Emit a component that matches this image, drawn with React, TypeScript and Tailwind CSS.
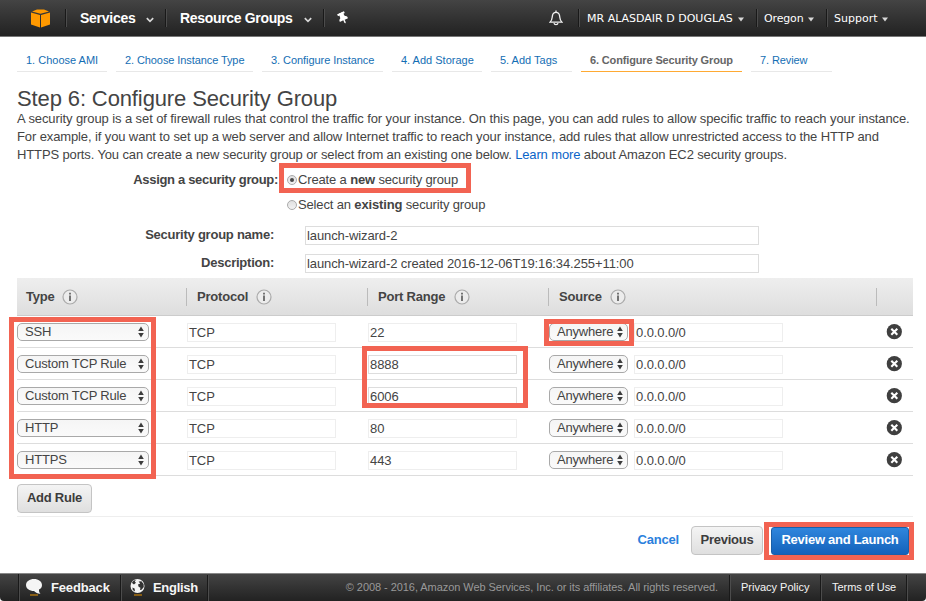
import type { ReactNode } from "react";
import { FaThumbtack } from "react-icons/fa";

const steps = [
  { label: "1. Choose AMI", box: "w-[90px]", track: "tracking-[0px]" },
  { label: "2. Choose Instance Type", box: "w-[137px]", track: "tracking-[-0.09px]" },
  { label: "3. Configure Instance", box: "w-[121px]", track: "tracking-[-0.06px]" },
  { label: "4. Add Storage", box: "w-[90px]", track: "tracking-[0px]" },
  { label: "5. Add Tags", box: "w-[81px]", track: "tracking-[0px]" },
  { label: "6. Configure Security Group", box: "w-[161px]", track: "tracking-[-0.14px]", active: true },
  { label: "7. Review", box: "w-[81px]", track: "tracking-[-0.1px]" },
];

const rules = [
  { type: "SSH", port: "22" },
  { type: "Custom TCP Rule", port: "8888", editable: true },
  { type: "Custom TCP Rule", port: "6006", editable: true },
  { type: "HTTP", port: "80" },
  { type: "HTTPS", port: "443" },
];

function Chevron() {
  return (
    <svg width="8" height="6" viewBox="0 0 8 6" fill="none" stroke="#d8d8d8" strokeWidth="1.7">
      <path d="M0.8 1.2L4 4.3L7.2 1.2" />
    </svg>
  );
}

function Caret() {
  return (
    <svg width="6" height="5" viewBox="0 0 6 5" fill="#d8d8d8">
      <path d="M0 0.4H6L3 4.4Z" />
    </svg>
  );
}

function Divider() {
  return <span className="h-[18px] w-[2px] shrink-0 border-l border-r border-l-[#191919] border-r-[#4c4c4c]" />;
}

function InfoIcon() {
  return (
    <svg width="16" height="16" viewBox="0 0 16 16">
      <circle cx="8" cy="8" r="7" fill="#ececec" stroke="#aaa" strokeWidth="1.2" />
      <path d="M8 6.6V12" stroke="#555" strokeWidth="1.6" />
      <path d="M8 3.8V5.5" stroke="#555" strokeWidth="1.6" />
    </svg>
  );
}

function Select({ children, className }: { children: ReactNode; className: string }) {
  return (
    <div className={`flex h-[18px] items-center justify-between rounded-[5px] border border-[#a9a9a9] bg-gradient-to-b from-[#f5f5f5] to-[#fafafa] pr-[4px] pl-[7px] ${className}`}>
      <span className="leading-[16px] tracking-[-0.2px] whitespace-nowrap">{children}</span>
      <svg width="6" height="12" viewBox="0 0 6 12" fill="#3c3c3c">
        <path d="M3 0.5L5.8 5H0.2ZM3 11.5L0.2 7H5.8Z" />
      </svg>
    </div>
  );
}

function Field({ children, className }: { children: ReactNode; className: string }) {
  return <div className={`h-[19px] border bg-white pl-[1px] leading-[18px] tracking-[-0.1px] whitespace-nowrap ${className}`}>{children}</div>;
}

function HeadCell({ children, text }: { children: string; text: string }) {
  return (
    <div className="flex h-[18px] items-center pl-[9px] font-bold tracking-[-0.2px]">
      <span className={text}>{children}</span>
      <InfoIcon />
    </div>
  );
}

function Radio({ checked }: { checked?: boolean }) {
  return (
    <span className="flex size-[10px] items-center justify-center rounded-full border border-[#ababab] bg-gradient-to-b from-[#e0e0e0] to-[#f2f2f2]">
      {checked && <span className="size-[4px] rounded-full bg-[#4a4a4a]" />}
    </span>
  );
}

function RemoveIcon() {
  return (
    <svg width="17" height="17" viewBox="0 0 17 17">
      <circle cx="8.3" cy="8.7" r="7.6" fill="#3f3f3f" />
      <path d="M5.3 5.7L11.3 11.7M11.3 5.7L5.3 11.7" stroke="#fff" strokeWidth="2.1" />
    </svg>
  );
}

const greyButton =
  "flex items-center justify-center rounded-[4px] border border-[#c4c4c4] bg-gradient-to-b from-[#f4f4f4] to-[#dfdfdf] font-bold tracking-[-0.25px] text-[#3c3c3c]";

function Header() {
  return (
    <header className="flex h-[37px] items-center border-b border-[#777] bg-gradient-to-b from-[#444] to-[#222] text-white">
      <svg className="ml-[31px]" width="19" height="19" viewBox="0 0 19 19">
        <path d="M0 3.6L9 6V18.6L0 15.4Z" fill="#f90" />
        <path d="M19 3.6L10 6V18.6L19 15.4Z" fill="#f90" />
        <path d="M1 2.5L6 0.6H13L18 2.5L9.5 4.8Z" fill="#f90" />
      </svg>
      <span className="ml-[15px] flex"><Divider /></span>
      <span className="ml-[13px] w-[55px] pt-px text-[14px] font-bold tracking-[-0.25px] whitespace-nowrap">Services</span>
      <span className="ml-[11px] pt-[4px]"><Chevron /></span>
      <span className="ml-[11px] flex"><Divider /></span>
      <span className="ml-[13px] w-[113px] pt-px text-[14px] font-bold tracking-[-0.33px] whitespace-nowrap">Resource Groups</span>
      <span className="ml-[11px] pt-[4px]"><Chevron /></span>
      <span className="ml-[11px] flex"><Divider /></span>
      <FaThumbtack className="ml-[12px] size-[12px] -rotate-25" />
      <svg className="ml-auto" width="14" height="16" viewBox="0 0 14 16" fill="none" stroke="#f0f0f0" strokeWidth="1.3">
        <path d="M1 12.2H13C10.6 10.4 11 8 10.6 5.8C10.2 3.5 8.9 2.4 7 2.4S3.8 3.5 3.4 5.8C3 8 3.4 10.4 1 12.2Z" />
        <path d="M7 0.5V2.4M5 13.2C5.3 15.2 8.7 15.2 9 13.2" />
      </svg>
      <div className="ml-[15px] flex items-center font-['DejaVu_Sans',sans-serif] text-[11px] whitespace-nowrap">
        <Divider />
        <span className="ml-[7px] w-[146px] pt-[2px]">MR ALASDAIR D DOUGLAS</span>
        <span className="ml-[5px] pt-[2px]"><Caret /></span>
        <span className="ml-[12px] flex"><Divider /></span>
        <span className="ml-[6px] w-[40px] pt-[2px] tracking-[-0.15px]">Oregon</span>
        <span className="ml-[4px] pt-[2px]"><Caret /></span>
        <span className="ml-[12px] flex"><Divider /></span>
        <span className="ml-[6px] w-[44px] pt-[2px]">Support</span>
        <span className="mr-[38px] ml-[4px] pt-[2px]"><Caret /></span>
      </div>
    </header>
  );
}

function FooterRule() {
  return <span className="h-full w-[2px] border-l border-r border-l-[#191919] border-r-[#4c4c4c]" />;
}

function Footer() {
  return (
    <footer className="mt-auto flex h-[28px] items-center border-t border-[#888] bg-gradient-to-b from-[#444] to-[#222] text-[#f5f5f5]">
      <span className="ml-[18px] flex h-full"><FooterRule /></span>
      <svg className="ml-[6px]" width="16" height="17" viewBox="0 0 16 17">
        <path d="M4 15.2H12V16.7H4Z" fill="#a8700f" />
        <path d="M8 0C3.6 0 0 2.4 0 6S3.4 12 8 12C9 13 11.5 15 14.5 14.8C13 13.5 12.8 11.8 13 10.6C15 9.6 16 8 16 6C16 2.4 12.4 0 8 0Z" fill="#f5f5f5" />
      </svg>
      <span className="ml-[9px] w-[59px] text-[13px] font-bold tracking-[-0.15px]">Feedback</span>
      <span className="ml-[10px] flex h-[26px]"><FooterRule /></span>
      <svg className="ml-[8px]" width="16" height="17" viewBox="0 0 16 17">
        <path d="M4 15.2H12V16.7H4Z" fill="#a8700f" />
        <circle cx="7.5" cy="7" r="7" fill="#f5f5f5" />
        <path d="M2 3.6C3 2.2 4.4 1.4 5.8 1.1L4.8 2.8L6 3.8L4 5.4L2.8 4.8ZM8.6 2.6L11.4 2.2L13.6 5L13.8 8L11.6 10.8L10 11L10.4 8.8L8.6 7.8L8 5.4L10.2 4.4ZM2.4 8.4L4.6 9.4L5 12.6L2.8 11Z" fill="#333" />
      </svg>
      <span className="ml-[7px] w-[45px] text-[13px] font-bold tracking-[-0.3px]">English</span>
      <span className="ml-[9px] flex h-[26px]"><FooterRule /></span>
      <span className="ml-auto text-[11px] tracking-[-0.06px] whitespace-nowrap text-[#999]">
        © 2008 - 2016, Amazon Web Services, Inc. or its affiliates. All rights reserved.
      </span>
      <span className="ml-[11px] flex h-[26px]"><FooterRule /></span>
      <span className="ml-[10px] w-[68px] text-[11px] whitespace-nowrap">Privacy Policy</span>
      <span className="ml-[11px] flex h-[26px]"><FooterRule /></span>
      <span className="ml-[10px] w-[64px] text-[11px] tracking-[-0.05px] whitespace-nowrap">Terms of Use</span>
      <span className="mr-[18px] ml-[10px] flex h-[26px]"><FooterRule /></span>
    </footer>
  );
}

export default function App() {
  return (
    <div className="relative flex h-[601px] w-[926px] flex-col overflow-hidden rounded-b-[4px] bg-white font-['Liberation_Sans',Arial,sans-serif] text-[13px] text-[#444]">
      <Header />

      <nav className="flex gap-[9px] pt-[13px] pl-[17px] text-[11px] text-[#146eb4]">
        {steps.map((s) => (
          <div key={s.label} className={`flex h-[22px] flex-col ${s.box}`}>
            <span className={`h-[21px] pl-[9px] leading-[20px] whitespace-nowrap ${s.track} ${s.active ? "font-bold text-[#666666]" : ""}`}>
              {s.label}
            </span>
            <span className={`h-px w-full ${s.active ? "bg-[#ffaa33]" : "bg-[#e8e8e8]"}`} />
          </div>
        ))}
      </nav>

      <main className="px-[17px] pt-[14px]">
        <h1 className="h-[24px] text-[22px] leading-[26px] tracking-[-0.12px] whitespace-nowrap">Step 6: Configure Security Group</h1>
        <div className="h-[54px] leading-[18px] whitespace-nowrap">
          <p className="tracking-[-0.094px]">A security group is a set of firewall rules that control the traffic for your instance. On this page, you can add rules to allow specific traffic to reach your instance.</p>
          <p className="tracking-[-0.115px]">For example, if you want to set up a web server and allow Internet traffic to reach your instance, add rules that allow unrestricted access to the HTTP and</p>
          <p className="tracking-[-0.13px]">HTTPS ports. You can create a new security group or select from an existing one below. <span className="text-[#0a64c8]">Learn more</span> about Amazon EC2 security groups.</p>
        </div>

        <section className="pt-[6px] leading-[20px] whitespace-nowrap">
          <div className="flex h-[25px] tracking-[-0.15px]">
            <b className="w-[261px] text-right tracking-[-0.32px]">Assign a security group:</b>
            <span className="ml-[9px] flex h-[20px] items-center"><Radio checked /></span>
            <span className="ml-[1px]">Create a <b>new</b> security group</span>
          </div>
          <div className="flex h-[26px] pl-[270px] tracking-[-0.15px]">
            <span className="flex h-[20px] items-center"><Radio /></span>
            <span className="ml-[1px]">Select an <b>existing</b> security group</span>
          </div>
          <div className="flex h-[28px] pt-[5px]">
            <b className="-mt-[1px] w-[257px] text-right tracking-[-0.24px]">Security group name:</b>
            <Field className="ml-[31px] w-[454px] border-[#ddd]">launch-wizard-2</Field>
          </div>
          <div className="flex h-[29px] pt-[5px]">
            <b className="-mt-[1px] w-[257px] text-right tracking-[-0.24px]">Description:</b>
            <Field className="ml-[31px] w-[454px] border-[#ddd]">launch-wizard-2 created 2016-12-06T19:16:34.255+11:00</Field>
          </div>
        </section>

        <section className="w-[896px]">
          <div className="grid h-[38px] grid-cols-[169px_181px_181px_328px_37px] items-center border-b border-[#ccc] bg-gradient-to-b from-[#eee] to-[#dedede]">
            <HeadCell text="w-[36px]">Type</HeadCell>
            <div className="border-l border-[#bbb] pl-px"><HeadCell text="w-[59px]">Protocol</HeadCell></div>
            <div className="border-l border-[#bbb] pl-px"><HeadCell text="w-[76px]">Port Range</HeadCell></div>
            <div className="border-l border-[#bbb] pl-px"><HeadCell text="w-[51px]">Source</HeadCell></div>
            <div className="h-[18px] border-l border-[#bbb]" />
          </div>
          {rules.map((r, i) => (
            <div key={i} className="grid h-[32px] grid-cols-[170px_181px_181px_337px_27px] border-b border-[#ddd] pt-[7px]">
              <Select className="w-[132px]">{r.type}</Select>
              <Field className="w-[149px] border-[#eee]">TCP</Field>
              <Field className={`w-[149px] ${r.editable ? "border-[#ddd]" : "border-[#eee]"}`}>{r.port}</Field>
              <div className="flex gap-[6px]">
                <Select className="w-[79px]">Anywhere</Select>
                <Field className="w-[149px] border-[#eee]">0.0.0.0/0</Field>
              </div>
              <RemoveIcon />
            </div>
          ))}
          <div className="h-[41px] border-b border-[#eee] pt-[8px]">
            <button className={`${greyButton} h-[29px] w-[75px] pb-px`}>Add Rule</button>
          </div>
        </section>

        <div className="flex h-[39px] items-center justify-end pt-[9px] pr-[4px] pb-px">
          <span className="-mt-px font-bold tracking-[-0.2px] text-[#2a80dd]">Cancel</span>
          <button className={`${greyButton} ml-[12px] h-[29px] w-[72px] pb-px`}>Previous</button>
          <button className="mr-[-4px] ml-[8px] flex h-[28px] w-[138px] items-center justify-center rounded-[3px] border border-[#1a5fa8] bg-gradient-to-b from-[#2f86dd] to-[#1362bb] pb-[2px] font-bold tracking-[-0.25px] text-white">
            Review and Launch
          </button>
        </div>
      </main>

      <Footer />

      <div className="absolute top-[163px] left-[279px] h-[30px] w-[192px] border-5 border-[#f26352]" />
      <div className="absolute top-[317px] left-[9px] h-[162px] w-[147px] border-5 border-[#f26352]" />
      <div className="absolute top-[346px] left-[362px] h-[62px] w-[166px] border-5 border-[#f26352]" />
      <div className="absolute top-[319px] left-[544px] h-[27px] w-[90px] border-5 border-[#f26352]" />
      <div className="absolute top-[522px] left-[764px] h-[38px] w-[150px] border-5 border-[#f26352]" />
    </div>
  );
}
